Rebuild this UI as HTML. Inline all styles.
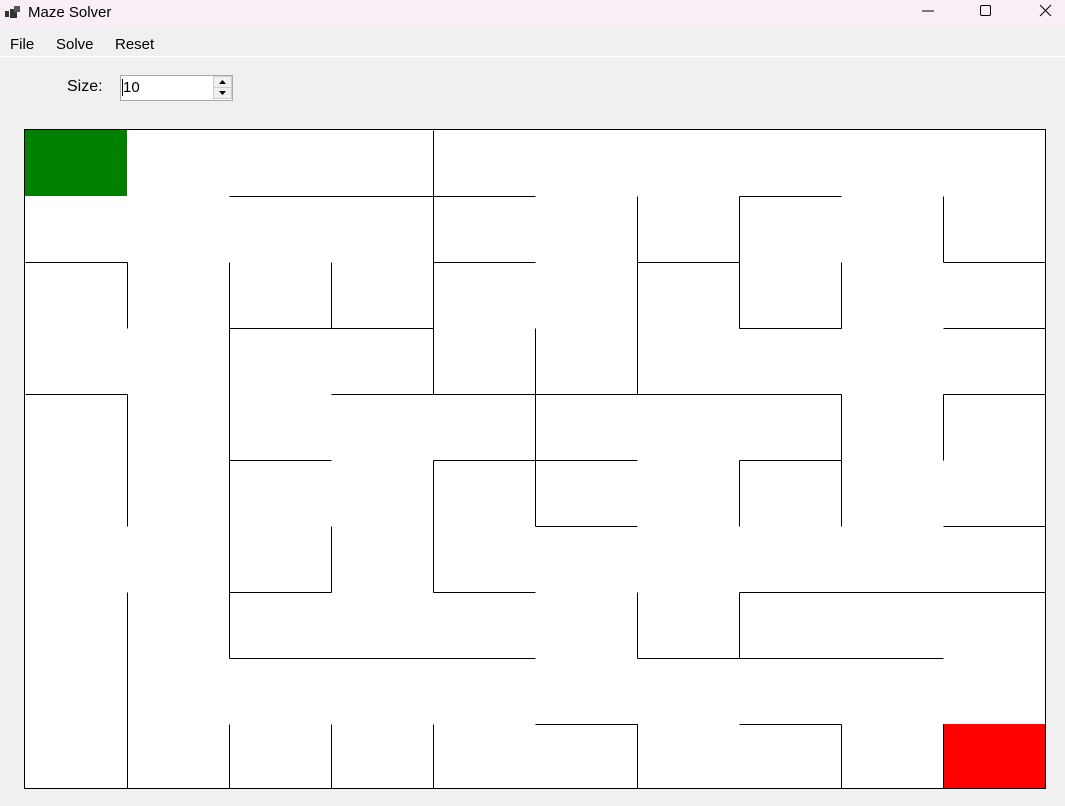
<!DOCTYPE html>
<html><head><style>
body{margin:0;width:1065px;height:806px;background:#f0f0f0;font-family:"Liberation Sans",sans-serif;position:relative;overflow:hidden}
.t{position:absolute;left:0;top:0;width:1065px;height:29px;background:#f8eef5}
.m{position:absolute;left:0;top:29px;width:1065px;height:27px;background:#f0f0f0;border-bottom:1px solid #fff}
.a{position:absolute;font-size:15px;color:#000}
</style></head><body>
<div class="t"></div>
<svg style="position:absolute;left:4px;top:5px" width="18" height="16"><rect x="1" y="6" width="4" height="6" fill="#333"/><rect x="6" y="4" width="7" height="9" fill="#333"/><rect x="10" y="1" width="6" height="6" fill="#555"/></svg>
<div class="a" style="left:28px;top:4px;font-size:15px">Maze Solver</div>
<svg style="position:absolute;left:900px;top:0" width="165" height="29"><line x1="22" y1="11" x2="34" y2="11" stroke="#000"/><rect x="80.5" y="5.5" width="10" height="10" rx="1.5" fill="none" stroke="#000"/><path d="M140 5L151 16M151 5L140 16" stroke="#000"/></svg>
<div class="m"></div>
<div class="a" style="left:10px;top:36px">File</div>
<div class="a" style="left:56px;top:36px">Solve</div>
<div class="a" style="left:115px;top:36px">Reset</div>
<div class="a" style="left:67px;top:78px;font-size:16px">Size:</div>
<div style="position:absolute;left:120px;top:75px;width:113px;height:26px;background:#fff;border:1px solid #aaa;box-sizing:border-box"></div>
<div style="position:absolute;left:122px;top:79px;width:1px;height:17px;background:#000"></div>
<div class="a" style="left:123px;top:79px">10</div>
<svg style="position:absolute;left:213px;top:76px" width="19" height="24"><rect x="0.5" y="0.5" width="18" height="11" fill="#f0f0f0" stroke="#ccc"/><rect x="0.5" y="11.5" width="18" height="11" fill="#f0f0f0" stroke="#ccc"/><path d="M6 8L9.5 4L13 8Z M6 15L13 15L9.5 19Z" fill="#000"/></svg>
<svg style="position:absolute;left:0;top:0" width="1065" height="806">
<rect x="24.5" y="129.5" width="1021" height="659" fill="#fff" stroke="#000"/>
<rect x="25" y="130" width="102" height="66" fill="#008000"/>
<rect x="943" y="724" width="102" height="64" fill="#f00"/>
<g stroke="#000" stroke-width="1" fill="none" transform="translate(0.5,0.5)">
<path d="M229 196H535M739 196H841
M25 262H127M433 262H535M637 262H739M943 262H1045
M229 328H433M739 328H841M943 328H1045
M25 394H127M331 394H841M943 394H1045
M229 460H331M433 460H637M739 460H841
M535 526H637M943 526H1045
M229 592H331M433 592H535M739 592H1045
M229 658H535M637 658H943
M535 724H637M739 724H841
M127 262V328M127 394V526M127 592V788
M229 262V658M229 724V788
M331 262V328M331 526V592M331 724V788
M433 130V394M433 460V592M433 724V788
M535 328V526
M637 196V394M637 592V658M637 724V788
M739 196V328M739 460V526M739 592V658
M841 262V328M841 394V526M841 724V788
M943 196V262M943 394V460M943 724V788"/>
</g>
</svg>
</body></html>
